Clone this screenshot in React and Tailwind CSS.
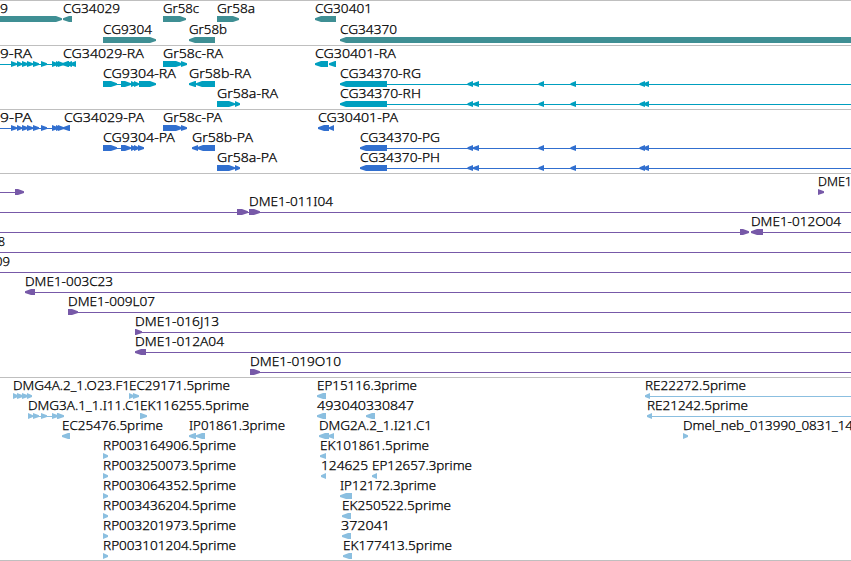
const END = 851;

// glyph tuples: [direction, start, end]
// label tuples: [text, x, drawn width]
// line tuples: [start, end]

const cds = [
  ["r", 11, 17], ["r", 17, 22], ["r", 22, 28], ["r", 27, 33],
  ["r", 33, 39], ["r", 41, 47], ["r", 52, 58], ["r", 56, 61], ["r", 58, 64],
];

const introns = [
  ["l", 467.5, 473], ["l", 473, 479], ["l", 538.5, 544], ["l", 570.5, 576],
  ["l", 639.5, 645], ["l", 643.5, 649],
];

const tracks = [
  {
    name: "gene",
    color: "text-[#3f8f94]",
    height: 45,
    pitch: 21,
    lanes: [
      {
        labels: [["9", 0, 8], ["CG34029", 63, 57], ["Gr58c", 163, 36], ["Gr58a", 217, 38], ["CG30401", 315, 57]],
        glyphs: [["r", -10, 62], ["l", 63, 72], ["r", 163, 186], ["r", 217, 239], ["l", 315, 336]],
      },
      {
        labels: [["CG9304", 103, 49], ["Gr58b", 189, 38], ["CG34370", 340, 57]],
        glyphs: [["r", 103, 156], ["l", 189, 215], ["l", 340, 860]],
      },
    ],
  },
  {
    name: "transcript",
    color: "text-[#009fbf]",
    height: 64,
    lanes: [
      {
        labels: [["9-RA", 0, 32], ["CG34029-RA", 63, 81], ["Gr58c-RA", 163, 60], ["CG30401-RA", 315, 81]],
        lines: [[0, 76], [175, 187]],
        glyphs: [
          ...cds, ["l", 62, 69], ["l", 66, 72], ["l", 70, 76],
          ["r", 163, 182], ["r", 181, 187], ["l", 315, 328], ["l", 329, 336],
        ],
      },
      {
        labels: [["CG9304-RA", 103, 73], ["Gr58b-RA", 189, 62], ["CG34370-RG", 340, 81]],
        lines: [[103, 156], [189, 215], [340, END]],
        glyphs: [
          ["r", 103, 117], ["r", 121, 131], ["r", 131, 136], ["r", 134, 139], ["r", 139, 156],
          ["l", 189, 196], ["l", 196, 215], ["l", 340, 387], ...introns,
        ],
      },
      {
        labels: [["Gr58a-RA", 217, 61], ["CG34370-RH", 340, 81]],
        lines: [[217, 240], [340, END]],
        glyphs: [["r", 217, 235], ["r", 235, 240], ["l", 340, 387], ...introns],
      },
    ],
  },
  {
    name: "protein",
    color: "text-[#316fcf]",
    height: 64,
    lanes: [
      {
        labels: [["9-PA", 0, 32], ["CG34029-PA", 64, 80], ["Gr58c-PA", 163, 59], ["CG30401-PA", 318, 80]],
        lines: [[0, 70], [175, 187]],
        glyphs: [...cds, ["l", 63, 70], ["r", 163, 182], ["r", 181, 187], ["l", 318, 329], ["l", 329, 334]],
      },
      {
        labels: [["CG9304-PA", 103, 72], ["Gr58b-PA", 192, 61], ["CG34370-PG", 360, 80]],
        lines: [[103, 144], [192, 215], [360, END]],
        glyphs: [
          ["r", 103, 117], ["r", 121, 131], ["r", 131, 136], ["r", 134, 139], ["r", 138, 144],
          ["l", 192, 198], ["l", 197, 215], ["l", 360, 387], ...introns,
        ],
      },
      {
        labels: [["Gr58a-PA", 217, 60], ["CG34370-PH", 360, 80]],
        lines: [[217, 240], [360, END]],
        glyphs: [["r", 217, 235], ["r", 235, 240], ["l", 360, 387], ...introns],
      },
    ],
  },
  {
    name: "bac",
    color: "text-[#7759a8]",
    height: 204,
    lanes: [
      { labels: [["DME1", 818, 34]], lines: [[0, 23]], glyphs: [["r", 15, 24], ["r", 818, 824]] },
      { labels: [["DME1-011I04", 249, 84]], lines: [[0, END]], glyphs: [["r", 237, 248], ["r", 249, 260]] },
      { labels: [["DME1-012O04", 751, 90]], lines: [[0, 749], [751, END]], glyphs: [["r", 740, 749], ["l", 751, 763]] },
      { labels: [["8", -2, 7]], lines: [[0, END]] },
      { labels: [["09", -5, 15]], lines: [[0, END]] },
      { labels: [["DME1-003C23", 25, 88]], lines: [[25, END]], glyphs: [["l", 25, 35]] },
      { labels: [["DME1-009L07", 68, 87]], lines: [[68, END]], glyphs: [["r", 68, 78]] },
      { labels: [["DME1-016J13", 135, 84]], lines: [[135, END]], glyphs: [["r", 135, 142]] },
      { labels: [["DME1-012A04", 135, 89]], lines: [[135, END]], glyphs: [["l", 135, 146]] },
      { labels: [["DME1-019O10", 250, 91]], lines: [[250, END]], glyphs: [["r", 250, 260]] },
    ],
  },
  {
    name: "est",
    color: "text-[#8bbfe0]",
    height: 183,
    lanes: [
      {
        labels: [["DMG4A.2_1.O23.F1", 13, 117], ["EC29171.5prime", 129, 101], ["EP15116.3prime", 317, 100], ["RE22272.5prime", 645, 101]],
        lines: [[13, 32], [645, END]],
        glyphs: [["r", 13, 18], ["r", 17, 23], ["r", 22, 28], ["r", 27, 32], ["r", 129, 134], ["r", 133, 139], ["l", 317, 326], ["l", 645, 650]],
      },
      {
        labels: [["DMG3A.1_1.I11.C1", 28, 113], ["EK116255.5prime", 140, 109], ["493040", 317, 49], ["330847", 366, 48], ["RE21242.5prime", 647, 101]],
        lines: [[28, 64], [647, END]],
        glyphs: [
          ["r", 28, 33], ["r", 33, 39], ["r", 41, 47], ["r", 52, 58], ["r", 57, 64],
          ["r", 140, 147], ["l", 317, 326], ["l", 366, 375], ["l", 647, 652],
        ],
      },
      {
        labels: [["EC25476.5prime", 62, 101], ["IP01861.3prime", 189, 96], ["DMG2A.2_1.I21.C1", 319, 113], ["Dmel_neb_013990_0831_14", 683, 170]],
        glyphs: [["l", 62, 70], ["l", 189, 196], ["l", 196, 205], ["l", 319, 329], ["l", 328, 334], ["r", 683, 688]],
      },
      { labels: [["RP003164906.5prime", 103, 133], ["EK101861.5prime", 320, 109]], glyphs: [["r", 103, 108], ["l", 320, 326]] },
      {
        labels: [["RP003250073.5prime", 103, 133], ["124625", 321, 47], ["EP12657.3prime", 372, 100]],
        glyphs: [["r", 103, 108], ["l", 321, 326], ["l", 372, 377]],
      },
      { labels: [["RP003064352.5prime", 103, 133], ["IP12172.3prime", 340, 96]], glyphs: [["r", 103, 108], ["l", 340, 352]] },
      { labels: [["RP003436204.5prime", 103, 133], ["EK250522.5prime", 342, 109]], glyphs: [["r", 103, 108], ["l", 342, 351]] },
      { labels: [["RP003201973.5prime", 103, 133], ["372041", 341, 49]], glyphs: [["r", 103, 108], ["l", 342, 351]] },
      { labels: [["RP003101204.5prime", 103, 133], ["EK177413.5prime", 343, 109]], glyphs: [["r", 103, 108], ["l", 343, 352]] },
    ],
  },
];

function Glyph({ dir, x1, x2 }) {
  const head = Math.min(6, x2 - x1);
  const d =
    dir === "r"
      ? `M${x1} 15H${x2 - head}L${x2} 17.2V19L${x2 - head} 21H${x1}Z`
      : `M${x2} 15H${x1 + head}L${x1} 17.2V19L${x1 + head} 21H${x2}Z`;
  return <path d={d} fill="currentColor" />;
}

function Lane({ y, labels = [], lines = [], glyphs = [] }) {
  return (
    <g transform={`translate(0 ${y})`}>
      {lines.map(([x1, x2]) => (
        <rect key={x1} x={x1} y="18" width={x2 - x1} height="1" fill="currentColor" />
      ))}
      {glyphs.map(([dir, x1, x2]) => (
        <Glyph key={x1} dir={dir} x1={x1} x2={x2} />
      ))}
      {labels.map(([text, x, width]) => (
        <text
          key={text}
          x={x}
          y="12"
          textLength={width}
          lengthAdjust="spacingAndGlyphs"
          className="fill-black stroke-black stroke-[0.25px]"
        >
          {text}
        </text>
      ))}
    </g>
  );
}

function Track({ color, height, pitch = 20, lanes }) {
  return (
    <section className="border-t border-[#bfbfbf]" style={{ height }}>
      <svg width={END} height={height - 1} className={`block overflow-hidden ${color}`}>
        {lanes.map((lane, i) => (
          <Lane key={i} y={i * pitch} {...lane} />
        ))}
      </svg>
    </section>
  );
}

export default function App() {
  return (
    <main className="flex h-[561px] w-[851px] flex-col overflow-hidden border-b border-[#bfbfbf] bg-white font-['Noto_Sans',sans-serif] text-[12.5px] font-light">
      {tracks.map((track) => (
        <Track key={track.name} {...track} />
      ))}
    </main>
  );
}
